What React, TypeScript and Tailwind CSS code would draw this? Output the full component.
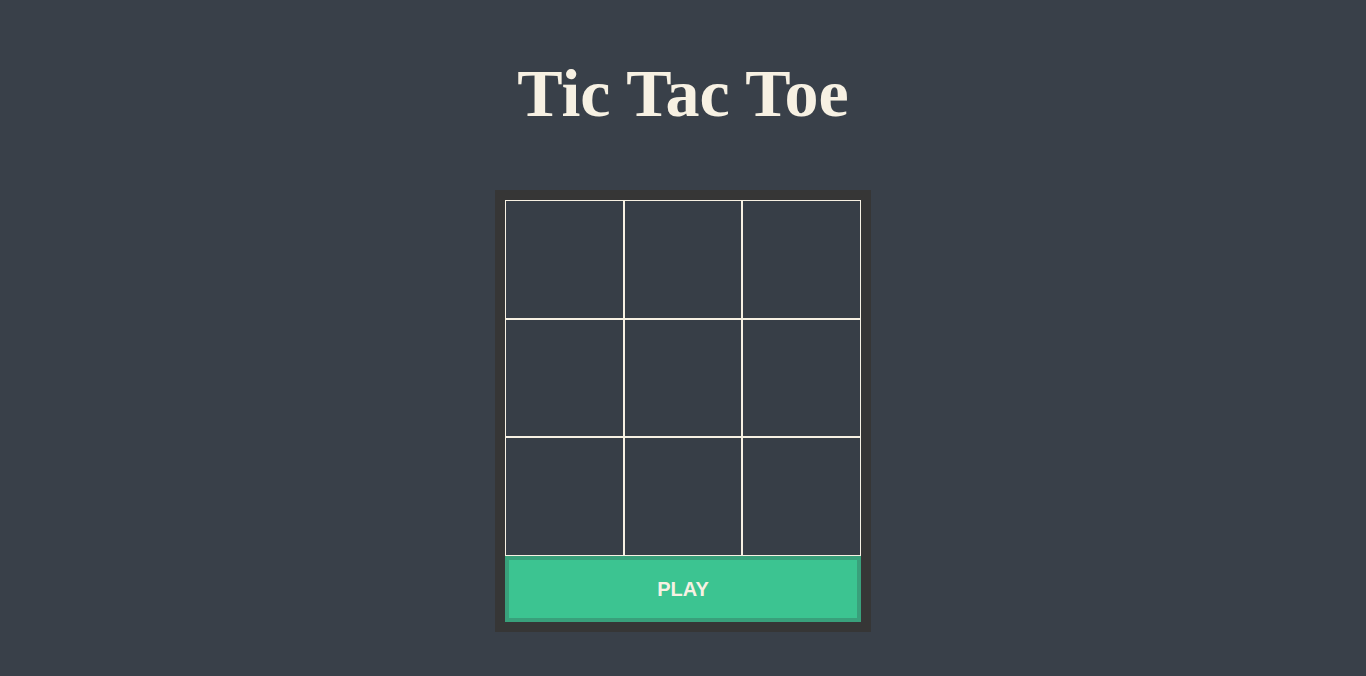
import React from 'react';

const cells = Array.from({ length: 9 }, (_, i) => i);

const App: React.FC = () => (
  <div className="min-h-screen w-full bg-[#394049] flex flex-col items-center pt-[59px]">
    <h1 className="font-['Liberation_Serif',serif] font-bold text-[68px] leading-none text-[#f7f1e3]">
      Tic Tac Toe
    </h1>

    <div className="mt-[63px] w-[376px] bg-[#363636] p-[10px]">
      <div className="grid grid-cols-3">
        {cells.map((i) => (
          <div key={i} className="h-[118.67px] bg-[#373e47] border border-[#f7f1e3]" />
        ))}
      </div>
      <button className="w-full h-[66px] bg-[#3cc491] border-4 border-[#39a07b] text-[#f7f1e3] font-['Liberation_Sans',sans-serif] font-bold text-xl">
        PLAY
      </button>
    </div>
  </div>
);

export default App;
